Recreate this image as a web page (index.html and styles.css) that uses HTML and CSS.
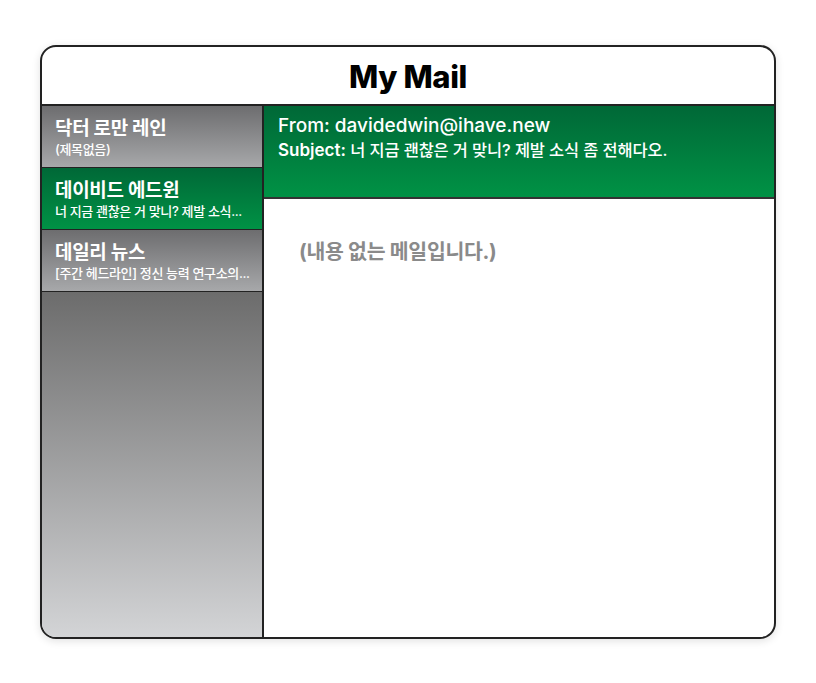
FILE: index.html
```html
<!DOCTYPE html>
<html lang="ko">
<head>
<meta charset="utf-8">
<title>My Mail</title>
<link rel="stylesheet" href="styles.css">
</head>
<body>
<div class="window">
  <header class="titlebar"><h1>My Mail</h1></header>
  <div class="main">
    <aside class="sidebar">
      <div class="item gray">
        <div class="name">닥터 로만 레인</div>
        <div class="sub">(제목없음)</div>
      </div>
      <div class="item green">
        <div class="name">데이비드 에드윈</div>
        <div class="sub">너 지금 괜찮은 거 맞니? 제발 소식...</div>
      </div>
      <div class="item gray">
        <div class="name">데일리 뉴스</div>
        <div class="sub">[주간 헤드라인] 정신 능력 연구소의...</div>
      </div>
      <div class="fill"></div>
    </aside>
    <section class="content">
      <div class="mailhead">
        <div class="from">From: davidedwin@ihave.new</div>
        <div class="subject"><b>Subject:</b> 너 지금 괜찮은 거 맞니? 제발 소식 좀 전해다오.</div>
      </div>
      <div class="mailbody">(내용 없는 메일입니다.)</div>
    </section>
  </div>
</div>
</body>
</html>
```
FILE: styles.css
```css
* { box-sizing: border-box; }
html, body { margin: 0; padding: 0; background: #fff; }
body {
  width: 816px;
  height: 683px;
  padding: 45px 0 0 40px;
  font-family: Inter, "Noto Sans CJK KR", sans-serif;
}
.window {
  width: 736px;
  height: 594px;
  border: 2px solid #222;
  border-radius: 16px;
  overflow: hidden;
  display: flex;
  flex-direction: column;
  box-shadow: 0 2px 8px rgba(0,0,0,0.12);
  background: #fff;
}
.titlebar {
  height: 59px;
  border-bottom: 2px solid #222;
  display: flex;
  align-items: center;
  justify-content: center;
  flex-shrink: 0;
}
.titlebar h1 {
  margin: 0;
  font-size: 31px;
  font-weight: 800;
  letter-spacing: -0.4px;
  color: #000;
  padding-top: 2px;
}
.main { flex: 1; display: flex; min-height: 0; }
.sidebar {
  width: 222px;
  border-right: 2px solid #222;
  display: flex;
  flex-direction: column;
  flex-shrink: 0;
}
.item {
  height: 62px;
  border-bottom: 1px solid #222;
  padding: 10px 0 0 13px;
  color: #fff;
}
.item.gray { background: linear-gradient(#6d6d6f, #a7a8aa); }
.item.green { background: linear-gradient(#006837, #009245); }
.item .name {
  font-size: 19px;
  font-weight: 700;
  line-height: 25px;
  letter-spacing: -0.3px;
}
.item .sub {
  font-size: 13px;
  font-weight: 500;
  line-height: 17px;
  letter-spacing: -0.35px;
}
.fill { flex: 1; background: linear-gradient(#6c6c6c, #d3d4d6); }
.content { flex: 1; display: flex; flex-direction: column; }
.mailhead {
  height: 93px;
  border-bottom: 2px solid #333;
  background: linear-gradient(#006837, #009245);
  color: #fff;
  padding: 7px 0 0 14px;
}
.from {
  font-size: 19px;
  line-height: 25px;
  font-weight: 500;
}
.subject {
  font-size: 16.4px;
  font-weight: 500;
  line-height: 25px;
  letter-spacing: -0.1px;
}
.subject b { font-size: 17px; font-weight: 600; letter-spacing: 0; }
.mailbody {
  padding: 36px 0 0 35px;
  font-size: 20.5px;
  font-weight: 700;
  color: #8a8a8a;
  letter-spacing: -0.3px;
}
```
